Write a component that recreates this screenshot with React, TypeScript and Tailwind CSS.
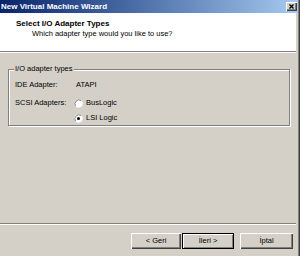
import React from "react";

const font = { fontFamily: '"Liberation Sans", Arial, sans-serif' };

const Radio = ({ checked }: { checked?: boolean }) => (
  <svg width="9" height="9" viewBox="0 0 9 9" className="shrink-0">
    <circle cx="4.5" cy="4.5" r="4" fill="#ffffff" />
    <path d="M1.7 7.3 A4 4 0 0 1 7.3 1.7" fill="none" stroke="#808080" strokeWidth="1" />
    <path d="M7.3 1.7 A4 4 0 0 1 1.7 7.3" fill="none" stroke="#ffffff" strokeWidth="1" />
    {checked && <circle cx="4.5" cy="4.5" r="1.5" fill="#000000" />}
  </svg>
);

const Button = ({ label, isDefault, className }: { label: string; isDefault?: boolean; className?: string }) => (
  <div
    className={`h-[16px] flex items-center justify-center text-[7.5px] text-black bg-[#d4d0c8] ${
      isDefault
        ? "border border-black shadow-[inset_1px_1px_0_#fff,inset_-1px_-1px_0_#808080]"
        : "shadow-[inset_1px_1px_0_#fff,inset_-1px_-1px_0_#404040,inset_-2px_-2px_0_#808080]"
    } ${className ?? ""}`}
  >
    {label}
  </div>
);

export default function App() {
  return (
    <div className="w-[300px] h-[256px] bg-[#d4d0c8] flex overflow-hidden" style={font}>
      <div className="flex-1 flex flex-col">
        {/* title bar */}
        <div className="h-[13px] bg-linear-to-r from-[#0a246a] to-[#a6caf0] flex items-center justify-between">
          <span className="pl-[1px] text-[8px] font-bold text-white leading-none">New Virtual Machine Wizard</span>
          <div className="w-[11px] h-[9px] mr-[1px] bg-[#d4d0c8] shadow-[inset_1px_1px_0_#fff,inset_-1px_-1px_0_#404040,inset_-2px_-2px_0_#808080] flex items-center justify-center">
            <svg width="5" height="5" viewBox="0 0 5 5">
              <path d="M0.5 0.5 L4.5 4.5 M4.5 0.5 L0.5 4.5" stroke="#000" strokeWidth="1.3" />
            </svg>
          </div>
        </div>

        <div className="flex-1 flex flex-col pr-[2px]">
          {/* header */}
          <div className="h-[38px] bg-white flex flex-col">
            <div className="pl-[16px] pt-[6px] text-[8px] font-bold leading-[10px] text-black">Select I/O Adapter Types</div>
            <div className="pl-[32px] pt-[0px] text-[7.5px] leading-[10px] text-black">Which adapter type would you like to use?</div>
          </div>
          <div className="h-px bg-[#808080]" />
          <div className="h-px bg-white" />

          {/* body */}
          <div className="h-[170px] pt-[16px] pl-[8px] pr-[5px]">
            <div className="relative h-[57px] w-[282px] border border-[#808080] shadow-[1px_1px_0_#fff,inset_1px_1px_0_#fff] text-[7.5px] text-black">
              <span className="absolute left-[5px] -top-[6px] bg-[#d4d0c8] px-[1px] leading-[10px]">I/O adapter types</span>
              <div className="pl-[6px] pt-[9px] flex flex-col">
                <div className="flex items-center h-[12px]">
                  <span className="w-[61px]">IDE Adapter:</span>
                  <span>ATAPI</span>
                </div>
                <div className="flex items-center h-[12px] mt-[6px]">
                  <span className="w-[59px]">SCSI Adapters:</span>
                  <Radio />
                  <span className="ml-[3px]">BusLogic</span>
                </div>
                <div className="flex items-center h-[12px] mt-[3px]">
                  <span className="w-[59px]" />
                  <Radio checked />
                  <span className="ml-[3px]">LSI Logic</span>
                </div>
              </div>
            </div>
          </div>

          <div className="h-px bg-[#808080]" />
          <div className="h-px bg-white" />

          {/* buttons */}
          <div className="flex pt-[8px] pl-[131px]">
            <Button label="< Geri" className="w-[50px]" />
            <Button label="İleri >" isDefault className="w-[52px] ml-[1px]" />
            <Button label="İptal" className="w-[53px] ml-[6px]" />
          </div>
        </div>
      </div>
      <div className="w-px bg-[#808080]" />
      <div className="w-px bg-[#404040]" />
    </div>
  );
}
